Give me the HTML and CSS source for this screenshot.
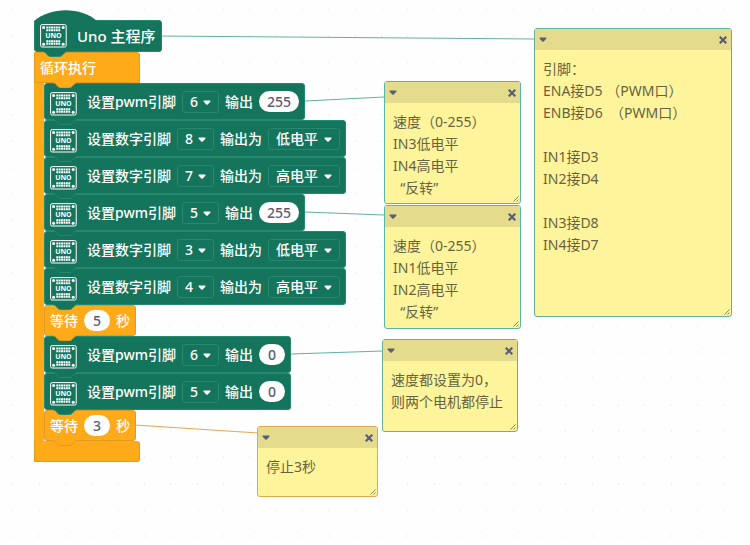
FILE: index.html
```
<!DOCTYPE html>
<html lang="zh-CN">
<head>
<meta charset="utf-8">
<title>Uno 主程序</title>
<link rel="stylesheet" href="styles.css">
</head>
<body>
<svg class="sprites" aria-hidden="true">
  <symbol id="board" viewBox="0 0 27 24">
    <rect x="0.6" y="0.6" width="25.6" height="22.4" rx="1.5" fill="none" stroke="#fff" stroke-width="1"/>
    <g fill="#fff">
      <circle cx="3.6" cy="3.4" r="1.5"/><circle cx="23.2" cy="3.4" r="1.5"/>
      <circle cx="3.6" cy="20.2" r="1.5"/><circle cx="23.2" cy="20.2" r="1.5"/>
    </g>
    <g stroke="#fff" stroke-width="2" stroke-dasharray="1.9 0.5">
      <path d="M6.3 3.6H20.6M6.3 6.2H20.6M6.3 17.2H20.6M6.3 19.8H20.6"/>
    </g>
    <text x="13.4" y="14.4" text-anchor="middle" class="board-name">UNO</text>
  </symbol>
  <symbol id="caret" viewBox="0 0 8 5"><path d="M1 .5H7Q8 1 7.3 1.8L4.7 4.5Q4 5 3.3 4.5L.7 1.8Q0 1 1 .5Z" fill="currentColor"/></symbol>
  <symbol id="notch" viewBox="0 0 24 6">
    <path class="notch-fill" d="M0 0V1C1.500 1 2 1.300 2.600 2L5 4.400Q6 5.500 7.500 5.500H16.500Q18 5.500 19 4.400L21.400 2C22 1.300 22.500 1 24 1V0Z"/>
    <path class="notch-edge" d="M0 .5C1.500.5 2 1.300 2.600 2L5 4.400Q6 5.500 7.500 5.500H16.500Q18 5.500 19 4.400L21.400 2C22 1.300 22.500.5 24 .5"/>
  </symbol>
  <symbol id="close" viewBox="0 0 8 8"><path d="M1.500 1.500L6.500 6.500M6.500 1.500L1.500 6.500" stroke="currentColor" stroke-width="2.200" stroke-linecap="square"/></symbol>
  <symbol id="grip" viewBox="0 0 6 6"><path d="M.5 5.500L5.500.5M3.500 5.500L5.500 3.500" stroke="#8d8760" stroke-width="1"/></symbol>
</svg>

<main class="workspace">
  <svg class="backdrop" aria-hidden="true">
    <defs>
      <pattern id="dots" x="26" y="-3" width="79" height="79" patternUnits="userSpaceOnUse">
        <path d="M13 13h1M39 13h1M65 13h1M13 39h1M39 39h1M65 39h1M13 65h1M39 65h1M65 65h1" stroke="#ddd" stroke-width="1"/>
      </pattern>
    </defs>
    <rect width="100%" height="100%" fill="url(#dots)"/>
    <g class="links">
      <path d="M159 36L535 39M305 101L384 97M305 212L384 215M291 354L383 351"/>
      <path class="link-control" d="M135 425L258 433"/>
    </g>
  </svg>

  <section class="script">
    <div class="block board hat">
      <svg class="hat-top" viewBox="0 0 64 12"><path d="M0 12V11C17 -3.300 47 -3.300 63 11L64 12Z"/></svg>
      <svg class="icon"><use href="#board"/></svg><span class="label">Uno 主程序</span>
      <svg class="notch"><use href="#notch"/></svg>
    </div>
    <div class="loop">
      <div class="block control loop-head"><span>循环执行</span><svg class="notch"><use href="#notch"/></svg></div>
      <div class="loop-body">
        <div class="block board">
          <svg class="icon"><use href="#board"/></svg><span class="label">设置pwm引脚</span>
          <span class="drop"><select aria-label="引脚"><option>6</option></select><svg class="caret"><use href="#caret"/></svg></span>
          <span>输出</span><input class="wide" aria-label="输出" value="255">
          <svg class="notch"><use href="#notch"/></svg>
        </div>
        <div class="block board">
          <svg class="icon"><use href="#board"/></svg><span class="label">设置数字引脚</span>
          <span class="drop"><select aria-label="引脚"><option>8</option></select><svg class="caret"><use href="#caret"/></svg></span>
          <span>输出为</span>
          <span class="drop level"><select aria-label="输出为"><option>低电平</option></select><svg class="caret"><use href="#caret"/></svg></span>
          <svg class="notch"><use href="#notch"/></svg>
        </div>
        <div class="block board">
          <svg class="icon"><use href="#board"/></svg><span class="label">设置数字引脚</span>
          <span class="drop"><select aria-label="引脚"><option>7</option></select><svg class="caret"><use href="#caret"/></svg></span>
          <span>输出为</span>
          <span class="drop level"><select aria-label="输出为"><option>高电平</option></select><svg class="caret"><use href="#caret"/></svg></span>
          <svg class="notch"><use href="#notch"/></svg>
        </div>
        <div class="block board">
          <svg class="icon"><use href="#board"/></svg><span class="label">设置pwm引脚</span>
          <span class="drop"><select aria-label="引脚"><option>5</option></select><svg class="caret"><use href="#caret"/></svg></span>
          <span>输出</span><input class="wide" aria-label="输出" value="255">
          <svg class="notch"><use href="#notch"/></svg>
        </div>
        <div class="block board">
          <svg class="icon"><use href="#board"/></svg><span class="label">设置数字引脚</span>
          <span class="drop"><select aria-label="引脚"><option>3</option></select><svg class="caret"><use href="#caret"/></svg></span>
          <span>输出为</span>
          <span class="drop level"><select aria-label="输出为"><option>低电平</option></select><svg class="caret"><use href="#caret"/></svg></span>
          <svg class="notch"><use href="#notch"/></svg>
        </div>
        <div class="block board">
          <svg class="icon"><use href="#board"/></svg><span class="label">设置数字引脚</span>
          <span class="drop"><select aria-label="引脚"><option>4</option></select><svg class="caret"><use href="#caret"/></svg></span>
          <span>输出为</span>
          <span class="drop level"><select aria-label="输出为"><option>高电平</option></select><svg class="caret"><use href="#caret"/></svg></span>
          <svg class="notch"><use href="#notch"/></svg>
        </div>
        <div class="block control">
          <span>等待</span><input aria-label="等待秒数" value="5"><span>秒</span>
          <svg class="notch"><use href="#notch"/></svg>
        </div>
        <div class="block board">
          <svg class="icon"><use href="#board"/></svg><span class="label">设置pwm引脚</span>
          <span class="drop"><select aria-label="引脚"><option>6</option></select><svg class="caret"><use href="#caret"/></svg></span>
          <span>输出</span><input aria-label="输出" value="0">
          <svg class="notch"><use href="#notch"/></svg>
        </div>
        <div class="block board">
          <svg class="icon"><use href="#board"/></svg><span class="label">设置pwm引脚</span>
          <span class="drop"><select aria-label="引脚"><option>5</option></select><svg class="caret"><use href="#caret"/></svg></span>
          <span>输出</span><input aria-label="输出" value="0">
          <svg class="notch"><use href="#notch"/></svg>
        </div>
        <div class="block control">
          <span>等待</span><input aria-label="等待秒数" value="3"><span>秒</span>
          <svg class="notch"><use href="#notch"/></svg>
        </div>
      </div>
      <div class="loop-foot"></div>
    </div>
  </section>

  <article class="note note-pins">
    <header><button aria-label="折叠"><svg class="caret"><use href="#caret"/></svg></button><button aria-label="删除"><svg class="close"><use href="#close"/></svg></button></header>
    <textarea aria-label="注释" rows="9">引脚：
ENA接D5 （PWM口）
ENB接D6  （PWM口）

IN1接D3
IN2接D4

IN3接D8
IN4接D7</textarea>
    <svg class="grip"><use href="#grip"/></svg>
  </article>
  <article class="note note-first">
    <header><button aria-label="折叠"><svg class="caret"><use href="#caret"/></svg></button><button aria-label="删除"><svg class="close"><use href="#close"/></svg></button></header>
    <textarea aria-label="注释" rows="4">速度（0-255）
IN3低电平
IN4高电平
  “反转”</textarea>
    <svg class="grip"><use href="#grip"/></svg>
  </article>
  <article class="note note-second">
    <header><button aria-label="折叠"><svg class="caret"><use href="#caret"/></svg></button><button aria-label="删除"><svg class="close"><use href="#close"/></svg></button></header>
    <textarea aria-label="注释" rows="4">速度（0-255）
IN1低电平
IN2高电平
  “反转”</textarea>
    <svg class="grip"><use href="#grip"/></svg>
  </article>
  <article class="note note-stop">
    <header><button aria-label="折叠"><svg class="caret"><use href="#caret"/></svg></button><button aria-label="删除"><svg class="close"><use href="#close"/></svg></button></header>
    <textarea aria-label="注释" rows="2">速度都设置为0，
则两个电机都停止</textarea>
    <svg class="grip"><use href="#grip"/></svg>
  </article>
  <article class="note note-wait">
    <header><button aria-label="折叠"><svg class="caret"><use href="#caret"/></svg></button><button aria-label="删除"><svg class="close"><use href="#close"/></svg></button></header>
    <textarea aria-label="注释" rows="1">停止3秒</textarea>
    <svg class="grip"><use href="#grip"/></svg>
  </article>
</main>
</body>
</html>
```
FILE: styles.css
```
:root {
  --board: #15745c;
  --board-edge: #238a70;
  --control: #ffab19;
  --control-edge: #e39a20;
  --link: #5fb3a2;
}

* { box-sizing: border-box; }

body {
  margin: 0;
  background: #fefefe;
  font-family: "Noto Sans", "Noto Sans CJK SC", sans-serif;
  font-size: 14px;
  line-height: 22px;
}

select, input, textarea, button {
  margin: 0;
  padding: 0;
  border: 0;
  background: none;
  font: inherit;
  color: inherit;
  outline: 0;
  appearance: none;
}

.sprites { display: none; }
.board-name { font: bold 7px "Noto Sans", sans-serif; fill: #fff; }

.workspace { position: relative; min-height: 100vh; overflow: hidden; }
.backdrop { position: absolute; inset: 0; width: 100%; height: 100%; }
.links { fill: none; stroke: var(--link); stroke-width: 1; }
.link-control { stroke: #e0a850; }

/* Block stack */
.script { position: absolute; left: 34px; top: 20px; }

.block {
  position: relative;
  display: flex;
  align-items: center;
  gap: 6px;
  width: max-content;
  height: 37px;
  padding: 0 5px;
  border: 1px solid;
  border-radius: 3px;
  color: #fff;
  font-weight: 500;
  white-space: nowrap;
}
.block.board { background: var(--board); border-color: var(--board-edge); --fill: var(--board); --edge: var(--board-edge); }
.block.control { height: 31px; background: var(--control); border-color: var(--control-edge); --fill: var(--control); --edge: var(--control-edge); }

.notch { position: absolute; z-index: 1; left: 8px; top: 100%; width: 24px; height: 6px; }
.notch-fill { fill: var(--fill); }
.notch-edge { fill: none; stroke: var(--edge); }

.icon { width: 27px; height: 24px; margin-top: 4px; }
.label { margin-left: 4px; }

.block.hat { height: 32px; font-size: 15px; }
.hat .icon { margin: 0; }
.hat-top { position: absolute; left: -1px; top: -11px; width: 64px; height: 12px; fill: var(--board); }

.loop { background: linear-gradient(to right, var(--control) 10px, transparent 10px); }
.loop-head { width: 106px; border-radius: 3px 3px 0 0; }
.loop-head .notch { left: 18px; }
.loop-body { margin-left: 10px; }
.loop-foot {
  width: 106px;
  height: 21px;
  background: var(--control);
  border: 1px solid var(--control-edge);
  border-top-color: var(--control);
  border-radius: 0 3px 3px 3px;
}

.drop { position: relative; display: flex; width: 37px; height: 22px; border: 1px solid #25886f; border-radius: 3px; }
.drop.level { width: 72px; }
.drop select { width: 100%; padding-left: 7px; line-height: 20px; }
.drop .caret { position: absolute; right: 7px; top: 8px; }
.caret { width: 8px; height: 5px; pointer-events: none; }

.block input { width: 26px; height: 21px; border-radius: 11px; background: #fff; color: #575e75; text-align: center; }
.block input.wide { width: 40px; }

/* Comments */
.note {
  position: absolute;
  display: flex;
  flex-direction: column;
  border: 1px solid var(--link);
  border-radius: 3px;
  background: #fef49c;
  color: #66633f;
}
.note header {
  display: flex;
  justify-content: space-between;
  align-items: center;
  height: 21px;
  padding: 0 4px;
  background: #e4db8c;
  color: #575e75;
}
.note button { display: flex; }
.close { width: 8px; height: 8px; }
.note textarea { flex: 1; width: 100%; padding: 8px 0 0 8px; resize: none; overflow: hidden; white-space: pre; }
.grip { position: absolute; right: 1px; bottom: 1px; width: 6px; height: 6px; }

.note-pins { left: 534px; top: 28px; width: 198px; height: 289px; }
.note-first { left: 384px; top: 81px; width: 137px; height: 123px; }
.note-second { left: 384px; top: 205px; width: 137px; height: 124px; }
.note-stop { left: 382px; top: 339px; width: 136px; height: 93px; }
.note-wait { left: 257px; top: 426px; width: 121px; height: 71px; border-color: #e0a850; }
```
